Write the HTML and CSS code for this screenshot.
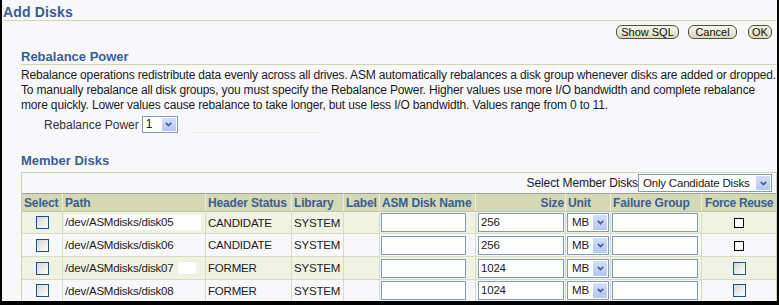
FILE: index.html
```html
<!DOCTYPE html>
<html lang="en">
<head>
<meta charset="utf-8">
<title>Add Disks</title>
<link rel="stylesheet" href="styles.css">
</head>
<body>
<div class="page">
  <h1 class="title">Add Disks</h1>
  <div class="actions">
    <button class="btn btn-sql" type="button">Show SQL</button>
    <button class="btn btn-cancel" type="button">Cancel</button>
    <button class="btn btn-ok" type="button">OK</button>
  </div>
  <div class="section">
    <h2 class="sub">Rebalance Power</h2>
    <p class="desc">Rebalance operations redistribute data evenly across all drives. ASM automatically rebalances a disk group whenever disks are added or dropped.<br>To manually rebalance all disk groups, you must specify the Rebalance Power. Higher values use more I/O bandwidth and complete rebalance<br>more quickly. Lower values cause rebalance to take longer, but use less I/O bandwidth. Values range from 0 to 11.</p>
    <div class="field-row">
      <span class="field-label">Rebalance Power</span>
      <span class="select sel-power"><span class="sel-val">1</span><span class="sel-btn"><svg width="7" height="5" viewBox="0 0 7 5"><path d="M0.8 0.8 L3.5 3.6 L6.2 0.8" fill="none" stroke="#4a5f8a" stroke-width="1.7"/></svg></span></span>
      <span class="faint-line"></span>
    </div>
    <h2 class="sub sub-plain">Member Disks</h2>
    <div class="tablebox">
      <div class="filterbar">
        <span class="filter-label">Select Member Disks</span>
        <span class="select sel-member"><span class="sel-val">Only Candidate Disks</span><span class="sel-btn"><svg width="7" height="5" viewBox="0 0 7 5"><path d="M0.8 0.8 L3.5 3.6 L6.2 0.8" fill="none" stroke="#4a5f8a" stroke-width="1.7"/></svg></span></span>
      </div>
      <table class="disks">
        <thead>
          <tr>
            <th class="w-sel">Select</th>
            <th class="w-path">Path</th>
            <th class="w-status">Header Status</th>
            <th class="w-lib">Library</th>
            <th class="w-label">Label</th>
            <th class="w-name">ASM Disk Name</th>
            <th class="w-size num">Size</th>
            <th class="w-unit">Unit</th>
            <th class="w-fg">Failure Group</th>
            <th class="w-force">Force Reuse</th>
          </tr>
        </thead>
        <tbody>
          <tr class="band">
            <td class="ctr"><span class="xpcheck"></span></td>
            <td class="txt"><span class="patch-wide">/dev/ASMdisks/disk05</span></td>
            <td class="txt">CANDIDATE</td>
            <td class="txt">SYSTEM</td>
            <td></td>
            <td><span class="inp inp-name"></span></td>
            <td><span class="inp inp-size">256</span></td>
            <td><span class="select sel-unit"><span class="sel-val">MB</span><span class="sel-btn"><svg width="7" height="5" viewBox="0 0 7 5"><path d="M0.8 0.8 L3.5 3.6 L6.2 0.8" fill="none" stroke="#4a5f8a" stroke-width="1.7"/></svg></span></span></td>
            <td><span class="inp inp-fg"></span></td>
            <td class="ctr"><span class="plaincheck"></span></td>
          </tr>
          <tr class="tall">
            <td class="ctr"><span class="xpcheck"></span></td>
            <td class="txt">/dev/ASMdisks/disk06</td>
            <td class="txt">CANDIDATE</td>
            <td class="txt">SYSTEM</td>
            <td></td>
            <td><span class="inp inp-name"></span></td>
            <td><span class="inp inp-size">256</span></td>
            <td><span class="select sel-unit"><span class="sel-val">MB</span><span class="sel-btn"><svg width="7" height="5" viewBox="0 0 7 5"><path d="M0.8 0.8 L3.5 3.6 L6.2 0.8" fill="none" stroke="#4a5f8a" stroke-width="1.7"/></svg></span></span></td>
            <td><span class="inp inp-fg"></span></td>
            <td class="ctr"><span class="plaincheck"></span></td>
          </tr>
          <tr class="band tall">
            <td class="ctr"><span class="xpcheck"></span></td>
            <td class="txt">/dev/ASMdisks/disk07<span class="patch-small"></span></td>
            <td class="txt">FORMER</td>
            <td class="txt">SYSTEM</td>
            <td></td>
            <td><span class="inp inp-name"></span></td>
            <td><span class="inp inp-size">1024</span></td>
            <td><span class="select sel-unit"><span class="sel-val">MB</span><span class="sel-btn"><svg width="7" height="5" viewBox="0 0 7 5"><path d="M0.8 0.8 L3.5 3.6 L6.2 0.8" fill="none" stroke="#4a5f8a" stroke-width="1.7"/></svg></span></span></td>
            <td><span class="inp inp-fg"></span></td>
            <td class="ctr"><span class="xpcheck"></span></td>
          </tr>
          <tr>
            <td class="ctr"><span class="xpcheck"></span></td>
            <td class="txt">/dev/ASMdisks/disk08</td>
            <td class="txt">FORMER</td>
            <td class="txt">SYSTEM</td>
            <td></td>
            <td><span class="inp inp-name"></span></td>
            <td><span class="inp inp-size">1024</span></td>
            <td><span class="select sel-unit"><span class="sel-val">MB</span><span class="sel-btn"><svg width="7" height="5" viewBox="0 0 7 5"><path d="M0.8 0.8 L3.5 3.6 L6.2 0.8" fill="none" stroke="#4a5f8a" stroke-width="1.7"/></svg></span></span></td>
            <td><span class="inp inp-fg"></span></td>
            <td class="ctr"><span class="xpcheck"></span></td>
          </tr>
        </tbody>
      </table>
    </div>
  </div>
</div>
</body>
</html>
```
FILE: styles.css
```css
html, body {
  margin: 0;
  padding: 0;
  background: #000;
}
body {
  width: 779px;
  height: 305px;
  overflow: hidden;
}
.page {
  margin-left: 2px;
  width: 775px;
  height: 301px;
  overflow: hidden;
  background: #f8f8fb;
  font-family: "Liberation Sans", Arial, sans-serif;
  font-size: 12px;
  color: #1a1a1a;
}
.title {
  margin: 0 1px;
  padding-top: 4px;
  font-size: 14px;
  line-height: 16px;
  font-weight: bold;
  letter-spacing: 0.15px;
  color: #3a5d93;
  border-bottom: 1px solid #d3d3b2;
}
.actions {
  display: flex;
  justify-content: flex-end;
  margin-top: 4px;
  padding-right: 5px;
}
.btn {
  box-sizing: border-box;
  height: 14px;
  padding: 0;
  border: 1px solid #4f4f40;
  border-radius: 6px;
  background: linear-gradient(#f8f8ec, #d9d9bf);
  font-family: "Liberation Sans", Arial, sans-serif;
  font-size: 11px;
  line-height: 12px;
  color: #111;
}
.btn-sql { width: 63px; }
.btn-cancel { width: 49px; margin-left: 9px; }
.btn-ok { width: 24px; margin-left: 11px; }
.section {
  margin: 10px 0 0 19px;
}
.sub {
  margin: 0;
  font-size: 13px;
  line-height: 15px;
  font-weight: bold;
  color: #3a5d93;
  border-bottom: 1px solid #d3d3b2;
}
.sub-plain {
  margin-top: 20px;
  border-bottom: none;
}
.desc {
  margin: 3px 0 0;
  line-height: 15px;
  letter-spacing: -0.16px;
  white-space: nowrap;
}
.field-row {
  display: flex;
  align-items: center;
  height: 17px;
  margin-top: 3px;
  padding-left: 23px;
}
.field-label {
  color: #333;
  margin-right: 3px;
}
.faint-line {
  align-self: flex-end;
  width: 130px;
  margin-left: 13px;
  border-bottom: 1px solid #f0efdc;
}
.select {
  display: inline-flex;
  box-sizing: border-box;
  border: 1px solid #7f9db9;
  background: #fff;
  vertical-align: middle;
}
.sel-val {
  flex: 1;
  padding-left: 3px;
  white-space: nowrap;
  overflow: hidden;
}
.sel-btn {
  flex: none;
  width: 14px;
  margin: 1px;
  display: flex;
  align-items: center;
  justify-content: center;
  background: linear-gradient(#d2defd, #b3c7f5);
  border-radius: 1px;
}
.sel-power {
  width: 36px;
  height: 17px;
  line-height: 15px;
}
.filter-label {
  letter-spacing: -0.1px;
}
.sel-member {
  width: 134px;
  height: 18px;
  line-height: 16px;
  font-size: 11.5px;
  letter-spacing: -0.2px;
}
.sel-member .sel-val { padding-left: 4px; }
.sel-unit {
  display: flex;
  width: 42px;
  height: 19px;
  line-height: 17px;
  margin-left: 1px;
}
.sel-unit .sel-val { padding-left: 4px; }
.tablebox {
  margin-top: 4px;
  width: 756px;
  box-sizing: border-box;
  border: 1px solid #cfd0ae;
}
.filterbar {
  display: flex;
  align-items: center;
  justify-content: flex-end;
  height: 20px;
  padding-right: 4px;
}
.disks {
  border-collapse: separate;
  border-spacing: 0;
  table-layout: fixed;
  width: 754px;
}
.disks th,
.disks td {
  box-sizing: border-box;
  padding: 0;
  vertical-align: middle;
  white-space: nowrap;
  overflow: hidden;
}
.disks th {
  height: 19px;
  padding: 0 2px;
  text-align: left;
  font-weight: bold;
  letter-spacing: -0.15px;
  color: #3a5d93;
  background: #d5d8b5;
  border-top: 1px solid #a2a292;
  border-bottom: 1px solid #c4c6a6;
}
.disks th + th {
  border-left: 1px solid #ebecdc;
}
.disks th.num {
  text-align: right;
  padding-right: 1px;
}
.disks th.w-force {
  padding: 0 0 0 3px;
  letter-spacing: -0.35px;
}
.w-sel { width: 40px; }
.w-path { width: 143px; }
.w-status { width: 86px; }
.w-lib { width: 52px; }
.w-label { width: 36px; }
.w-name { width: 96px; }
.w-size { width: 90px; }
.w-unit { width: 45px; }
.w-fg { width: 91px; }
.w-force { width: 75px; }
.disks td {
  height: 22px;
  font-size: 11.5px;
  letter-spacing: -0.2px;
  border-bottom: 1px solid #d9dbc5;
}
.disks td + td {
  border-left: 1px solid #d9dbc5;
}
.disks tr.tall td { height: 23px; }
.disks tr.band td { background: #f0f2e3; }
.disks td.txt { padding-left: 2px; }
.disks td.ctr { text-align: center; }
.patch-wide {
  display: inline-block;
  width: 136px;
  margin-left: -1px;
  padding-left: 1px;
  line-height: 15px;
  background: #fff;
}
.patch-small {
  display: inline-block;
  width: 18px;
  height: 12px;
  margin-left: 4px;
  vertical-align: middle;
  background: #fff;
}
.xpcheck {
  display: inline-block;
  width: 13px;
  height: 13px;
  box-sizing: border-box;
  border: 1px solid #1c5180;
  background: linear-gradient(135deg, #d6d6d0 0%, #fbfbf9 90%);
  vertical-align: middle;
}
.plaincheck {
  display: inline-block;
  width: 10px;
  height: 10px;
  box-sizing: border-box;
  border: 1px solid #000;
  background: #fff;
  vertical-align: middle;
}
.inp {
  display: block;
  box-sizing: border-box;
  height: 19px;
  border: 1px solid #7f9db9;
  background: #fff;
  line-height: 17px;
  padding-left: 2px;
}
.inp-name { width: 85px; margin-left: 1px; }
.inp-size { width: 86px; margin-left: 2px; }
.inp-fg { width: 86px; margin-left: 1px; }
```
